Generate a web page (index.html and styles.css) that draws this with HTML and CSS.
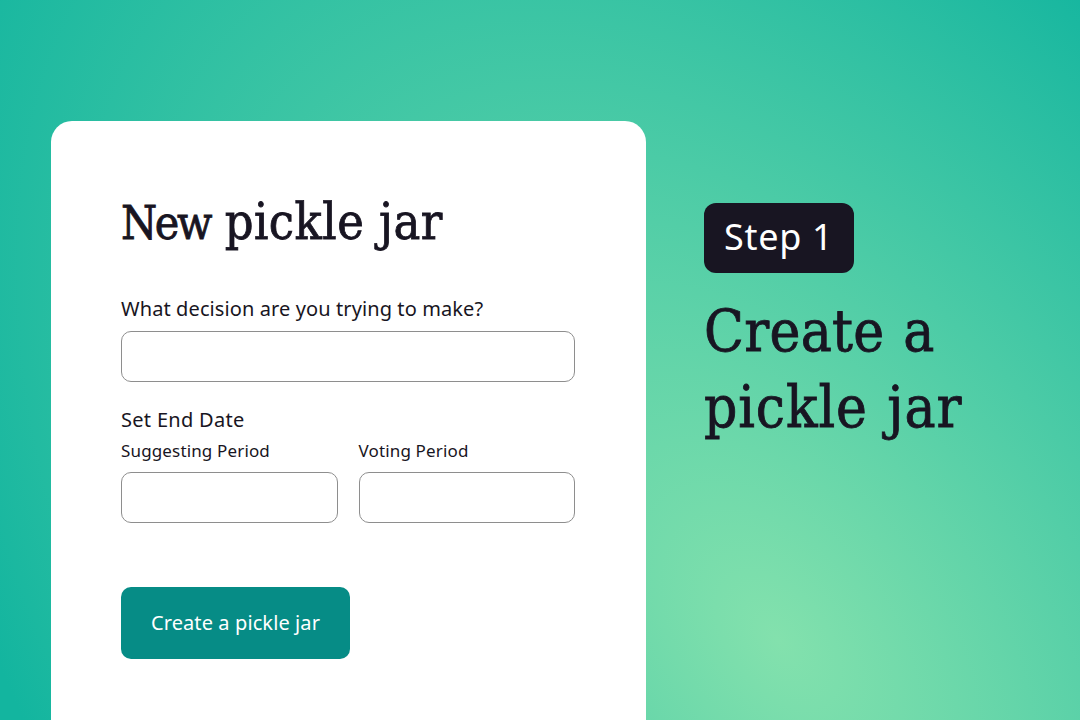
FILE: index.html
```html
<!DOCTYPE html>
<html lang="en">
<head>
  <meta charset="UTF-8" />
  <meta name="viewport" content="width=device-width, initial-scale=1" />
  <title>New pickle jar</title>
  <link rel="stylesheet" href="styles.css">
</head>
<body>
  <main class="page">
    <form class="card">
      <h1 class="card-title"><span class="tight">New</span> pickle jar</h1>
      <label class="label label-decision" for="decision">What decision are you trying to make?</label>
      <input class="field" type="text" id="decision" />
      <h2 class="label label-date">Set End Date</h2>
      <div class="periods">
        <div class="period">
          <label class="label-small" for="suggesting">Suggesting Period</label>
          <input class="field" type="text" id="suggesting" />
        </div>
        <div class="period">
          <label class="label-small" for="voting">Voting Period</label>
          <input class="field" type="text" id="voting" />
        </div>
      </div>
      <button class="submit" type="button">Create a pickle jar</button>
    </form>
    <section class="step">
      <div class="badge">Step 1</div>
      <h2 class="step-title">Create a<br /><span class="loose">pickle jar</span></h2>
    </section>
  </main>
</body>
</html>
```
FILE: styles.css
```css
* {
  box-sizing: border-box;
}
body {
  margin: 0;
  font-family: "Noto Sans", sans-serif;
  color: #181522;
}
h1, h2 {
  margin: 0;
  font-weight: normal;
}
.page {
  position: relative;
  display: flex;
  align-items: flex-start;
  gap: 58px;
  width: 1080px;
  height: 720px;
  padding: 121px 0 0 51px;
  overflow: hidden;
}
/* tilted glow behind everything */
.page::before {
  content: "";
  position: absolute;
  z-index: -1;
  left: -722px;
  top: -860px;
  width: 3000px;
  height: 3000px;
  transform: rotate(-38deg);
  background: radial-gradient(690px 1120px at center, #83e1ad, #13b59f);
}
.card {
  display: flex;
  flex-direction: column;
  align-items: flex-start;
  width: 595px;
  height: 640px;
  padding: 68px 71px 0 70px;
  background: white;
  border-radius: 21px;
}
.card-title, .step-title {
  font-family: "DejaVu Serif Condensed", "DejaVu Serif", serif;
  font-stretch: condensed;
  -webkit-text-stroke: 0.8px #181522;
  white-space: nowrap;
}
.card-title {
  height: 110px;
  font-size: 50px;
  line-height: 66px;
  letter-spacing: 0.5px;
}
.tight {
  font-size: 46px;
  letter-spacing: -2.4px;
}
.label {
  font-size: 20px;
  line-height: 20px;
  white-space: nowrap;
}
.label-decision {
  margin-bottom: 12px;
  letter-spacing: 0.1px;
}
.field {
  display: block;
  width: 100%;
  height: 51px;
  border: 1px solid #8e8e8e;
  border-radius: 10px;
  background: white;
}
.label-date {
  margin-top: 28px;
  letter-spacing: 0.3px;
}
.periods {
  display: flex;
  gap: 21px;
  width: 100%;
  margin-top: 11px;
}
.period {
  flex: 1;
}
.label-small {
  display: block;
  margin-bottom: 11px;
  font-size: 17px;
  line-height: 20px;
  letter-spacing: 0.15px;
  white-space: nowrap;
}
.submit {
  width: 229px;
  height: 72px;
  margin-top: 64px;
  padding: 0 0 2px;
  border: 0;
  border-radius: 10px;
  background: #068c86;
  color: white;
  font-family: inherit;
  font-size: 20px;
  letter-spacing: 0.1px;
}
.step {
  padding-top: 82px;
}
.badge {
  width: 150px;
  height: 70px;
  padding-left: 20px;
  border-radius: 12px;
  background: #181522;
  color: white;
  font-size: 36px;
  line-height: 68px;
  letter-spacing: 0.7px;
  white-space: nowrap;
}
.step-title {
  margin-top: 20px;
  font-size: 58px;
  line-height: 76px;
  letter-spacing: 0.3px;
  word-spacing: 2px;
}
.loose {
  letter-spacing: 0.9px;
}
```
